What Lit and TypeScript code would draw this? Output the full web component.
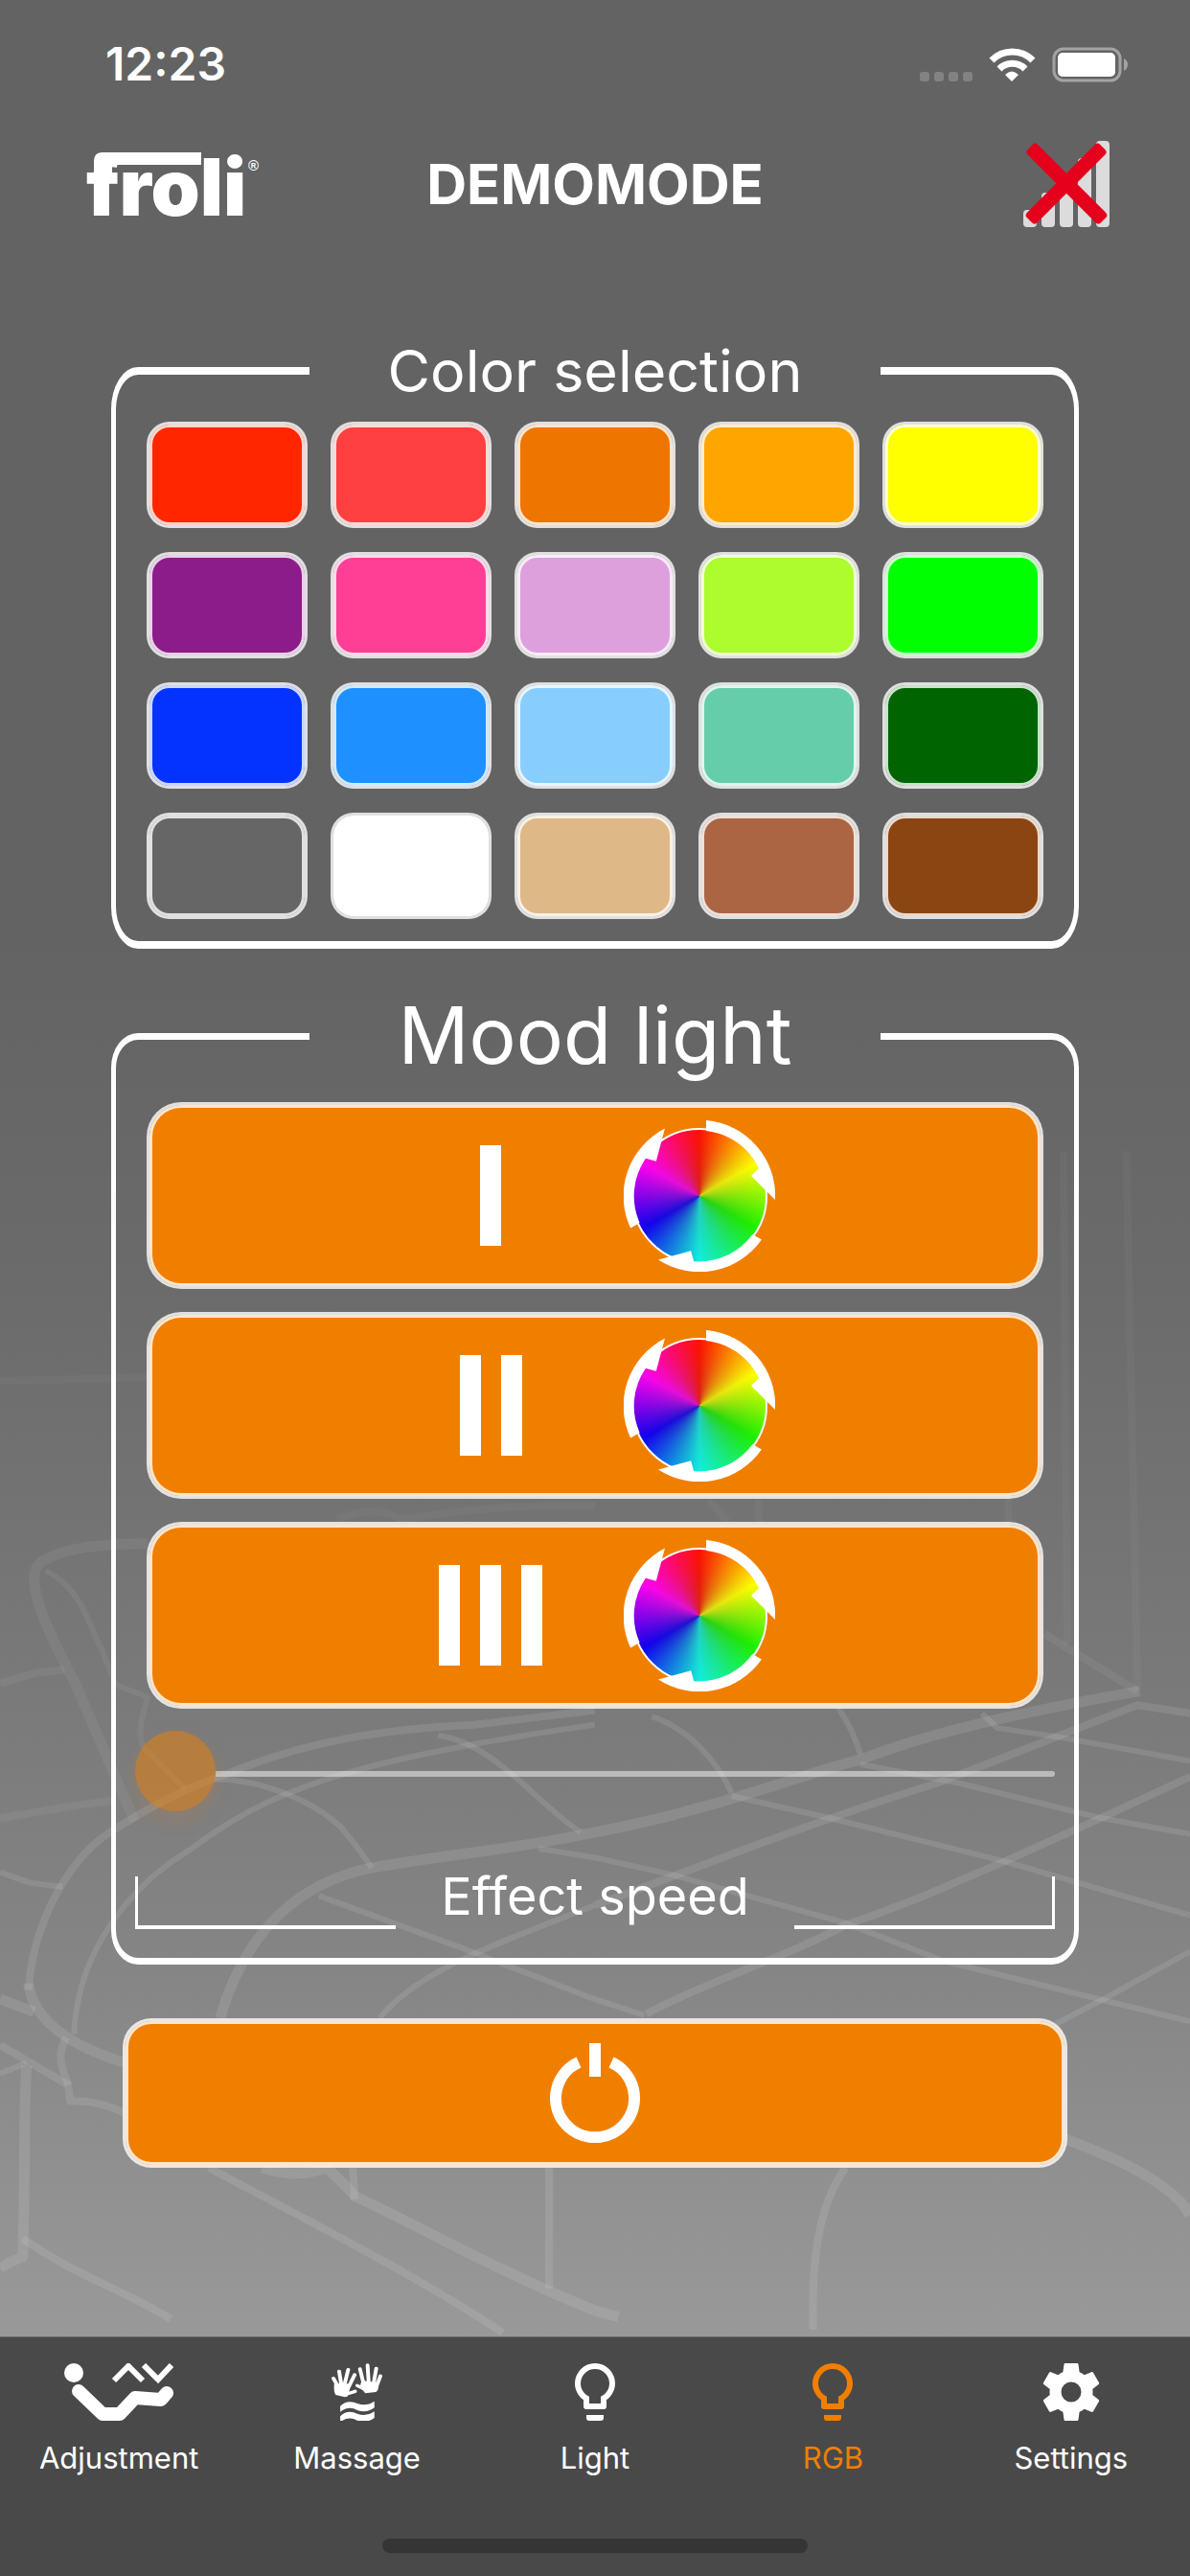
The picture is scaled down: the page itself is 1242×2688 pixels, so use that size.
import { LitElement, html, css, svg } from "lit";
import { customElement, property, state } from "lit/decorators.js";
import { classMap } from "lit/directives/class-map.js";
import { styleMap } from "lit/directives/style-map.js";

interface Swatch {
  name: string;
  color: string;
}

const SWATCHES: Swatch[] = [
  { name: "Red", color: "#ff2600" },
  { name: "Coral red", color: "#ff4040" },
  { name: "Dark orange", color: "#ee7600" },
  { name: "Orange", color: "#ffa500" },
  { name: "Yellow", color: "#ffff00" },
  { name: "Purple", color: "#8b1c89" },
  { name: "Pink", color: "#ff3e96" },
  { name: "Plum", color: "#dda0dd" },
  { name: "Green yellow", color: "#adfc2d" },
  { name: "Green", color: "#00ff00" },
  { name: "Blue", color: "#0433ff" },
  { name: "Sky blue", color: "#1e90ff" },
  { name: "Light blue", color: "#87ceff" },
  { name: "Aquamarine", color: "#66cdaa" },
  { name: "Dark green", color: "#006400" },
  { name: "Grey", color: "#666666" },
  { name: "White", color: "#ffffff" },
  { name: "Sand", color: "#deb887" },
  { name: "Sienna", color: "#ab6543" },
  { name: "Brown", color: "#8b4513" },
];

const BULB = svg`<path d="M12,2A7,7 0 0,1 19,9C19,11.38 17.81,13.47 16,14.74V17A1,1 0 0,1 15,18H9A1,1 0 0,1 8,17V14.74C6.19,13.47 5,11.38 5,9A7,7 0 0,1 12,2M9,21V20H15V21A1,1 0 0,1 14,22H10A1,1 0 0,1 9,21M12,4A5,5 0 0,0 7,9C7,11.05 8.23,12.81 10,13.58V16H14V13.58C15.77,12.81 17,11.05 17,9A5,5 0 0,0 12,4Z"/>`;
const COG = svg`<path d="M12,15.5A3.5,3.5 0 0,1 8.5,12A3.5,3.5 0 0,1 12,8.5A3.5,3.5 0 0,1 15.5,12A3.5,3.5 0 0,1 12,15.5M19.43,12.97C19.47,12.65 19.5,12.33 19.5,12C19.5,11.67 19.47,11.34 19.43,11L21.54,9.37C21.73,9.22 21.78,8.95 21.66,8.73L19.66,5.27C19.54,5.05 19.27,4.96 19.05,5.05L16.56,6.05C16.04,5.66 15.5,5.32 14.87,5.07L14.5,2.42C14.46,2.18 14.25,2 14,2H10C9.75,2 9.54,2.18 9.5,2.42L9.13,5.07C8.5,5.32 7.96,5.66 7.44,6.05L4.95,5.05C4.73,4.96 4.46,5.05 4.34,5.27L2.34,8.73C2.21,8.95 2.27,9.22 2.46,9.37L4.57,11C4.53,11.34 4.5,11.67 4.5,12C4.5,12.33 4.53,12.65 4.57,12.97L2.46,14.63C2.27,14.78 2.21,15.05 2.34,15.27L4.34,18.73C4.46,18.95 4.73,19.03 4.95,18.95L7.44,17.94C7.96,18.34 8.5,18.68 9.13,18.93L9.5,21.58C9.54,21.82 9.75,22 10,22H14C14.25,22 14.46,21.82 14.5,21.58L14.87,18.93C15.5,18.67 16.04,18.34 16.56,17.94L19.05,18.95C19.27,19.03 19.54,18.95 19.66,18.73L21.66,15.27C21.78,15.05 21.73,14.78 21.54,14.63L19.43,12.97Z"/>`;
const RECLINER = svg`
  <circle cx="10" cy="10" r="10"/>
  <g fill="none" stroke="currentColor">
    <path stroke-width="14" stroke-linejoin="round" stroke-linecap="round" d="M15 29L40 53H58L74 36L101 38L107 31"/>
    <path stroke-width="6" d="M52 18L67 3L82 18M83 2L98 17L112 2"/>
  </g>`;
const HANDS = svg`
  <g transform="scale(.396 .3333) translate(-873 -194)">
    <g stroke="currentColor" stroke-width="10" stroke-linecap="round" fill="none">
      <path d="M878 241L890 266M893 219L899 262M917 214L907 262M934 230L916 274M935 282L914 290"/>
      <path d="M948 212L958 260M968 200L971 255M991 210L984 258M1002 234L991 268M941 264L962 276"/>
    </g>
    <path d="M880 258L922 258L920 280L915 298L908 300L884 293Q878 285 880 258Z"/>
    <path d="M952 248L996 255Q999 278 990 284L962 288L948 268Z"/>
    <path d="M896 328Q915 306 941 320Q965 330 986 313V333Q965 352 941 341Q918 326 896 346Z"/>
    <path d="M896 360Q915 338 941 352Q965 362 986 345V365Q965 384 941 373Q918 358 896 378Z"/>
  </g>`;

const TABS = [
  { id: "adjustment", label: "Adjustment", box: "0 0 114 60", width: 114, icon: RECLINER },
  { id: "massage", label: "Massage", box: "0 0 54 60", width: 54, icon: HANDS },
  { id: "light", label: "Light", box: "2 2 20 20", width: 60, icon: BULB },
  { id: "rgb", label: "RGB", box: "2 2 20 20", width: 60, icon: BULB },
  { id: "settings", label: "Settings", box: "2 2 20 20", width: 60, icon: COG },
];

/** Faint line drawing of a slatted bed frame behind the controls. */
@customElement("bed-sketch")
class BedSketch extends LitElement {
  static styles = css`
    :host {
      display: block;
    }
    .sketch {
      display: block;
      width: 100%;
      height: 100%;
    }
    .lines path {
      fill: none;
      stroke: #fff;
      stroke-opacity: 0.1;
      stroke-width: 6px;
      stroke-linejoin: round;
      vector-effect: non-scaling-stroke;
    }
    .lines path.mid {
      stroke-width: 8px;
    }
    .lines path.bold {
      stroke-width: 11px;
    }
    .lines path.soft {
      stroke-opacity: 0.06;
    }
    .lines path.faint {
      stroke-width: 8px;
      stroke-opacity: 0.03;
    }
  `;

  render() {
    return html`
      <svg class="sketch" viewBox="0 0 1242 2438" preserveAspectRatio="none" aria-hidden="true">
        <g class="lines" transform="translate(0 1400) scale(.396 .663)">
          <path class="bold soft" d="M390 318Q200 318 130 340Q75 350 95 395Q110 440 200 540L355 755"/>
          <path class="soft" d="M120 360C220 390 235 450 265 480L305 540L390 560C360 610 370 630 380 640L490 705"/>
          <path class="mid soft" d="M0 538L90 522L170 516"/>
          <path class="mid soft" d="M0 750L200 730L300 722"/>
          <path d="M0 835L80 852L165 858"/>
          <path class="mid" d="M75 1020C90 900 200 800 310 765C400 730 500 700 600 680C800 630 1000 610 1250 603L1568 580"/>
          <path d="M195 1090C205 950 360 850 500 800C700 710 900 660 1568 603"/>
          <path class="bold" d="M580 1065C650 920 800 850 980 828C1200 805 1350 800 1568 772"/>
          <path d="M1000 1065C1100 990 1300 950 1568 887"/>
          <path d="M565 688C700 690 830 725 900 765C950 800 970 820 980 828"/>
          <path d="M840 872L1220 955L1568 1035"/>
          <path d="M1155 620C1300 630 1420 730 1530 772"/>
          <path d="M1420 798L1568 812"/>
          <path class="bold" d="M75 1010C90 1080 220 1115 330 1135"/>
          <path class="bold" d="M0 1035L90 1055"/>
          <path class="mid" d="M0 1107L180 1170L185 1195Q270 1195 330 1215"/>
          <path class="mid" d="M175 1095C150 1120 160 1140 180 1170"/>
          <path class="bold" d="M70 1140C60 1250 68 1300 60 1440Q20 1450 0 1458"/>
          <path d="M0 1152L70 1135"/>
          <path class="mid" d="M60 1412C200 1470 300 1485 450 1538"/>
          <path class="mid" d="M550 1300C800 1380 1100 1470 1325 1560"/>
          <path class="bold" d="M690 1300Q780 1318 860 1300Q900 1320 935 1345C1100 1390 1300 1460 1568 1525"/>
          <path class="mid" d="M1447 1300V1490"/>
          <path class="mid" d="M930 1300L935 1350"/>
          <path class="faint" d="M890 280Q980 255 1060 280Q1300 255 1568 258"/>
          <path class="faint" d="M0 62L390 56"/>
        </g>
        <g class="lines" transform="translate(621 1400) scale(.396 .663)">
          <path class="bold" d="M0 772C300 740 600 670 700 658C900 610 1200 575 1435 550"/>
          <path class="mid" d="M0 887C200 845 500 770 900 695C1100 650 1350 590 1430 572L1568 585"/>
          <path d="M0 812L210 840L660 915L920 975L1568 1070"/>
          <path d="M360 715L620 750L1080 818L1568 903"/>
          <path d="M150 590C250 610 320 660 360 710"/>
          <path d="M640 575Q680 610 700 650"/>
          <path d="M700 665L960 695L1320 748L1568 775"/>
          <path d="M1020 585L1060 608L1220 622L1568 660"/>
          <path class="mid" d="M135 1058C300 1005 500 970 660 918C850 880 950 850 1080 818L1340 748L1568 685"/>
          <path d="M1210 1075L1340 1035L1568 960"/>
          <path d="M0 1035L130 1060"/>
          <path class="mid" d="M575 1555C570 1440 590 1360 660 1300"/>
          <path class="bold" d="M1240 1255C1400 1290 1530 1330 1568 1375"/>
          <path class="bold" d="M0 1525L62 1535"/>
          <path class="mid soft" d="M1185 460L1430 550"/>
          <path class="faint" d="M1235 -300L1245 475"/>
          <path class="faint" d="M1400 -300L1430 550"/>
          <path class="faint" d="M1090 240V290"/>
          <path class="faint" d="M300 250L350 283M430 245V285"/>
        </g>
      </svg>
    `;
  }
}

/** Spectrum disc ringed by three turning arrows. */
@customElement("color-wheel")
class ColorWheel extends LitElement {
  static styles = css`
    :host {
      display: block;
      width: 158px;
      height: 158px;
      position: relative;
    }
    .disc {
      box-sizing: border-box;
      width: 142px;
      height: 142px;
      position: absolute;
      inset: 8px;
      border: 2px solid #fff;
      border-radius: 50%;
      background:
        radial-gradient(rgba(90, 90, 90, 0.25), rgba(90, 90, 90, 0) 70%),
        conic-gradient(#f10, #ff0 60deg, #1cf000 120deg, #1ed 180deg, #10e 240deg, #f0e 300deg, #f10);
    }
    .arrows {
      position: absolute;
      inset: 0;
      width: 158px;
      height: 158px;
      fill: #fff;
    }
  `;

  render() {
    const arrow = "M7 -79A79 79 0 0 1 79 4L71 -4L54 -21L62 -29A69 69 0 0 0 7 -68Z";
    return html`
      <div class="disc"></div>
      <svg class="arrows" viewBox="-79 -79 158 158" aria-hidden="true">
        ${[0, 120, 240].map((a) => svg`<path d=${arrow} transform="rotate(${a})"/>`)}
      </svg>
    `;
  }
}

@customElement("mood-button")
class MoodButton extends LitElement {
  @property({ type: Number }) level = 1;

  static styles = css`
    :host {
      display: block;
    }
    .mood {
      box-sizing: border-box;
      width: 100%;
      height: 195px;
      margin: 0;
      padding: 0;
      display: grid;
      grid-template-columns: 218px 218px;
      justify-content: center;
      align-items: center;
      justify-items: center;
      border: 3px solid rgba(255, 255, 255, 0.8);
      border-radius: 36px;
      background: #f07f00 padding-box;
      box-shadow: inset 0 0 0 3px rgba(255, 255, 255, 0.8);
      cursor: pointer;
    }
    .bars {
      display: flex;
      gap: 21px;
    }
    .bar {
      width: 22px;
      height: 105px;
      background: #fff;
    }
  `;

  render() {
    return html`
      <button class="mood" type="button" aria-label="Mood light ${this.level}">
        <span class="bars">${Array.from({ length: this.level }, () => html`<span class="bar"></span>`)}</span>
        <color-wheel></color-wheel>
      </button>
    `;
  }
}

@customElement("app-root")
class AppRoot extends LitElement {
  @state() private speed = 0;
  @state() private tab = "rgb";

  static styles = css`
    :host {
      display: block;
      font-family: Inter, "Liberation Sans", sans-serif;
      color: #fff;
    }
    .screen {
      min-height: 100vh;
      display: flex;
      flex-direction: column;
    }
    .page {
      flex: 1;
      position: relative;
      display: flex;
      flex-direction: column;
      background: linear-gradient(#636363 0, #636363 40%, #6b6b6b 55%, #7b7b7b 74%, #868686 85%, #999 100%);
    }
    .backdrop {
      position: absolute;
      inset: 0;
    }
    .status,
    .header,
    .content {
      position: relative;
    }
    .status {
      height: 134px;
      padding: 0 65px 0 110px;
      box-sizing: border-box;
      display: flex;
      align-items: center;
      justify-content: space-between;
    }
    .clock {
      font-size: 48px;
      font-weight: 600;
      line-height: 60px;
    }
    .indicators {
      display: flex;
      align-items: center;
      gap: 17px;
    }
    .indicators svg,
    .logo,
    .signal svg {
      display: block;
    }
    .header {
      height: 116px;
      padding: 0 84px;
      display: grid;
      grid-template-columns: 1fr auto 1fr;
      align-items: center;
    }
    .title {
      margin: 0;
      font-size: 58px;
      font-weight: 700;
      line-height: 72px;
    }
    .logo text {
      fill: #fff;
    }
    .word {
      font-family: Inter, "Liberation Sans", sans-serif;
      font-size: 82px;
      font-weight: 900;
    }
    .mark {
      font-family: "Liberation Sans", sans-serif;
      font-size: 15px;
      font-weight: 700;
    }
    .signal {
      justify-self: end;
      padding: 0;
      border: 0;
      background: none;
      cursor: pointer;
    }
    .content {
      padding: 97px 116px 0;
      display: flex;
      flex-direction: column;
    }
    .panel {
      min-width: 0;
      margin: 0;
      padding: 0 20px;
      border: 8px solid #fff;
      border-inline-width: 5px;
      border-radius: 28px / 44px;
    }
    .panel.mood {
      margin-top: 39px;
      border-block-width: 7px;
      border-radius: 28px / 36px;
    }
    .legend {
      width: 62%;
      margin: 0 auto;
      padding: 0;
      text-align: center;
      font-size: 61px;
      line-height: 80px;
    }
    .mood .legend {
      font-size: 82px;
      line-height: 104px;
    }
    .swatches {
      display: grid;
      grid-template-columns: repeat(5, 1fr);
      gap: 25px 24px;
      padding: 13px 12px 23px;
    }
    .swatch {
      height: 111px;
      padding: 0;
      border: 3px solid rgba(255, 255, 255, 0.8);
      border-radius: 24px;
      background-clip: padding-box;
      box-shadow: inset 0 0 0 3px rgba(255, 255, 255, 0.8);
      cursor: pointer;
    }
    .moods {
      display: flex;
      flex-direction: column;
      gap: 24px;
      padding: 17px 12px 0;
    }
    .slider {
      appearance: none;
      -webkit-appearance: none;
      display: block;
      width: 100%;
      height: 84px;
      margin: 26px 0 0;
      background: none;
      cursor: pointer;
    }
    .slider::-webkit-slider-runnable-track {
      height: 6px;
      border-radius: 3px;
      background: linear-gradient(to right, transparent 84px, rgba(255, 255, 255, 0.48) 84px);
    }
    .slider::-webkit-slider-thumb {
      -webkit-appearance: none;
      width: 84px;
      height: 84px;
      margin-top: -42px;
      border-radius: 50%;
      background: rgba(240, 127, 0, 0.5);
      box-shadow: 0 8px 20px rgba(240, 127, 0, 0.16);
    }
    .effect {
      margin: 65px 0 30px;
      display: grid;
      grid-template-columns: 1fr 416px 1fr;
    }
    .bracket {
      height: 51px;
      border-bottom: 4px solid #fff;
    }
    .bracket.start {
      border-left: 3px solid #fff;
    }
    .bracket.end {
      border-right: 3px solid #fff;
    }
    .caption {
      text-align: center;
      font-size: 54px;
      line-height: 42px;
    }
    .power {
      height: 156px;
      margin: 56px 12px 0;
      padding: 0;
      display: flex;
      align-items: center;
      justify-content: center;
      border: 3px solid rgba(255, 255, 255, 0.8);
      border-radius: 30px;
      background: #f07f00 padding-box;
      box-shadow: inset 0 0 0 3px rgba(255, 255, 255, 0.8);
      cursor: pointer;
    }
    .footer {
      height: 250px;
      box-sizing: border-box;
      border-top: 1px solid #6b6b6b;
      padding: 27px 0 24px;
      display: flex;
      flex-direction: column;
      align-items: center;
      justify-content: space-between;
      background: #494949;
    }
    .tabs {
      width: 100%;
      display: grid;
      grid-template-columns: repeat(5, 1fr);
    }
    .tab {
      display: flex;
      flex-direction: column;
      align-items: center;
      gap: 21px;
      color: #fff;
      fill: currentColor;
      text-decoration: none;
      font-size: 31px;
      line-height: 36px;
    }
    .tab.active {
      color: #f07f00;
    }
    .home {
      width: 444px;
      height: 15px;
      border-radius: 8px;
      background: #353535;
    }
  `;

  private onSpeed(e: Event) {
    this.speed = Number((e.target as HTMLInputElement).value);
  }

  private onTab(e: Event, id: string) {
    e.preventDefault();
    this.tab = id;
  }

  private renderStatus() {
    return html`
      <div class="status">
        <span class="clock">12:23</span>
        <div class="indicators">
          <svg width="55" height="37" viewBox="0 0 55 37" fill="#828282">
            ${[0, 15, 30, 45].map((x) => svg`<rect x=${x} y="26" width="10" height="10" rx="3"/>`)}
          </svg>
          <svg width="49" height="37" viewBox="0 0 49 37" fill="none" stroke="#fff">
            <path stroke-width="7" d="M3 14A30 30 0 0 1 46 14"/>
            <path stroke-width="7" d="M11 23A19 19 0 0 1 38 23"/>
            <path fill="#fff" stroke="none" d="M24 36L17 29Q24 22 31 29Z"/>
          </svg>
          <svg width="79" height="37" viewBox="0 0 79 37">
            <rect x="2" y="2" width="69" height="33" rx="10" fill="none" stroke="#a3a3a3" stroke-width="3"/>
            <rect x="6" y="6" width="60" height="25" rx="5" fill="#fff"/>
            <path fill="#a3a3a3" d="M75 12Q79 14 79 18Q79 23 75 25Z"/>
          </svg>
        </div>
      </div>
    `;
  }

  private renderHeader() {
    return html`
      <header class="header">
        <svg class="logo" width="192" height="112" viewBox="-6 -23 192 112" role="img" aria-label="Froli">
          <path fill="#fff" d="M8 30V9Q8 0 17 0H120V13H27V30Z"/>
          <text class="word" x="0" y="66">froli</text>
          <text class="mark" x="169" y="19">®</text>
        </svg>
        <h1 class="title">DEMOMODE</h1>
        <button class="signal" type="button" aria-label="Not connected">
          <svg width="90" height="90" viewBox="0 0 90 90">
            ${[18, 36, 54, 72, 90].map(
              (h, i) => svg`<rect x=${i * 19} y=${90 - h} width="14" height=${h} rx="4" fill="#dcdcdc"/>`,
            )}
            <g fill="#e5001c" transform="translate(45 45)">
              <rect x="-54" y="-8" width="108" height="15" rx="4" transform="rotate(45)"/>
              <rect x="-54" y="-8" width="108" height="15" rx="4" transform="rotate(-45)"/>
            </g>
          </svg>
        </button>
      </header>
    `;
  }

  render() {
    return html`
      <div class="screen">
        <main class="page">
          <bed-sketch class="backdrop"></bed-sketch>
          ${this.renderStatus()} ${this.renderHeader()}
          <div class="content">
            <fieldset class="panel">
              <legend class="legend">Color selection</legend>
              <div class="swatches">
                ${SWATCHES.map(
                  (s) => html`<button
                    class="swatch"
                    type="button"
                    aria-label=${s.name}
                    style=${styleMap({ backgroundColor: s.color })}
                  ></button>`,
                )}
              </div>
            </fieldset>
            <fieldset class="panel mood">
              <legend class="legend">Mood light</legend>
              <div class="moods">
                ${[1, 2, 3].map((n) => html`<mood-button .level=${n}></mood-button>`)}
              </div>
              <input
                class="slider"
                id="speed"
                type="range"
                min="0"
                max="100"
                .value=${String(this.speed)}
                @input=${this.onSpeed}
              />
              <div class="effect">
                <span class="bracket start"></span>
                <label class="caption" for="speed">Effect speed</label>
                <span class="bracket end"></span>
              </div>
            </fieldset>
            <button class="power" type="button" aria-label="Power">
              <svg width="94" height="104" viewBox="0 0 94 104">
                <path fill="none" stroke="#fff" stroke-width="12" d="M30 20A41 41 0 1 0 64 20"/>
                <rect x="41" y="0" width="12" height="35" fill="#fff"/>
              </svg>
            </button>
          </div>
        </main>
        <footer class="footer">
          <nav class="tabs">
            ${TABS.map(
              (t) => html`<a
                class=${classMap({ tab: true, active: t.id === this.tab })}
                href="#${t.id}"
                @click=${(e: Event) => this.onTab(e, t.id)}
              >
                <svg width=${t.width} height="60" viewBox=${t.box} aria-hidden="true">${t.icon}</svg>
                <span>${t.label}</span>
              </a>`,
            )}
          </nav>
          <div class="home"></div>
        </footer>
      </div>
    `;
  }
}
